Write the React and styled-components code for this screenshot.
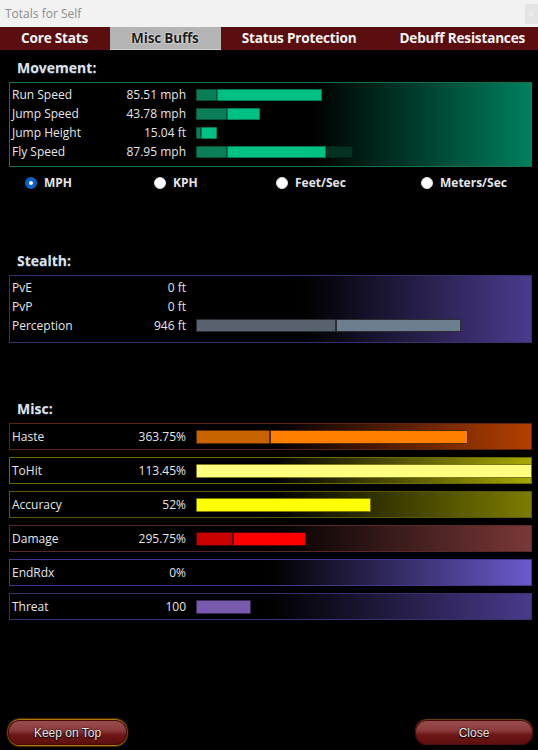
import React from "react";
import styled, { createGlobalStyle, css } from "styled-components";

const Global = createGlobalStyle`
  html, body { margin: 0; padding: 0; background: #000; }
  body { font-family: "Open Sans", "Noto Sans", sans-serif; }
  * { box-sizing: border-box; }
`;

const Window = styled.div`
  width: 538px;
  height: 750px;
  display: flex;
  flex-direction: column;
  background: #000;
  overflow: hidden;
`;

const TitleBar = styled.div`
  height: 27px;
  flex: none;
  display: flex;
  align-items: center;
  background: #f2f2f2;
  padding-left: 5px;
  color: #8c8c8c;
  font-size: 12px;
`;

const CloseBox = styled.div`
  margin-left: auto;
  width: 13px;
  height: 20px;
  background: #e4e4e4;
  color: #f4f4f4;
  font-size: 11px;
  line-height: 20px;
  padding-left: 3px;
  overflow: hidden;
`;

const TabBar = styled.div`
  height: 23px;
  flex: none;
  display: flex;
  background: #5a0e0f;
  overflow: hidden;
  white-space: nowrap;
`;

const Tab = styled.div`
  flex: none;
  padding: 0 22px 0 21px;
  height: 23px;
  line-height: 22px;
  font-size: 13.6px;
  font-weight: 700;
  color: #f4f4f4;
  letter-spacing: -0.2px;
  ${(p) =>
    p.$active &&
    css`
      background: #b4b4b4;
      color: #1c1c1c;
      text-shadow: 0 0 2px #fff, 0 0 1px #fff;
      border-bottom: 1px solid #d0d0d0;
    `}
`;

const Content = styled.div`
  display: flex;
  flex-direction: column;
  padding: 0 6px 0 9px;
`;

const Heading = styled.div`
  margin: ${(p) => p.$top}px 0 5px 8px;
  height: 18px;
  line-height: 18px;
  font-size: 14px;
  font-weight: 700;
  color: #dde3ea;
  text-shadow: 0 1px 1px #2a3550;
`;

const Panel = styled.div`
  border: 1px solid ${(p) => p.$border};
  background: linear-gradient(to right, #000 ${(p) => p.$stop}%, ${(p) => p.$color} 100%);
  padding: 2px 0 ${(p) => p.$pb}px 2px;
`;

const Row = styled.div`
  display: flex;
  align-items: center;
  height: 19px;
  font-size: 12px;
  color: #e6e6e6;
`;

const Label = styled.div`
  width: 110px;
  flex: none;
  white-space: nowrap;
`;

const Value = styled.div`
  width: 64px;
  flex: none;
  text-align: right;
  white-space: nowrap;
`;

const Bar = styled.div`
  margin-left: 10px;
  display: flex;
  height: ${(p) => p.$h}px;
`;

const Seg = styled.div`
  width: ${(p) => p.$w}px;
  height: 100%;
  background: ${(p) => p.$c};
  border: 1px solid ${(p) => p.$b || "rgba(0,0,0,0.35)"};
  border-radius: 1px;
`;

const RadioRow = styled.div`
  margin-top: 7px;
  height: 16px;
  display: grid;
  grid-template-columns: 129px 122px 145px auto;
  padding-left: 16px;
`;

const RadioItem = styled.div`
  display: flex;
  align-items: center;
  gap: 7px;
  font-size: 12px;
  font-weight: 700;
  color: #e4e6ea;
`;

const RadioDot = styled.span`
  width: 12px;
  height: 12px;
  border-radius: 50%;
  flex: none;
  background: #fff;
  ${(p) =>
    p.$on
      ? css`
          border: 4px solid #0a62c8;
        `
      : css`
          border: 1px solid #e0e0e0;
        `}
`;

const MiscList = styled.div`
  display: flex;
  flex-direction: column;
  gap: 7px;
`;

const MiscRow = styled.div`
  height: 27px;
  display: flex;
  align-items: center;
  padding-left: 2px;
  font-size: 12px;
  color: #e6e6e6;
  border: 1px solid ${(p) => p.$border};
  background: linear-gradient(to right, #000 ${(p) => p.$stop || 50}%, ${(p) => p.$color} 100%);
`;

const Footer = styled.div`
  margin-top: auto;
  display: flex;
  justify-content: space-between;
  padding: 0 5px 5px 8px;
`;

const Button = styled.div`
  width: ${(p) => p.$w}px;
  height: 25px;
  border-radius: 12px;
  display: flex;
  align-items: center;
  justify-content: center;
  font-family: "Liberation Sans", Arial, sans-serif;
  font-size: 12px;
  color: #e6e6e6;
  text-shadow: 0 0 2px #000, 0 1px 1px #000;
  background: linear-gradient(
    to bottom,
    #9a5050 0%,
    #8c3c3c 40%,
    #6e1616 60%,
    #5c0e0e 100%
  );
  box-shadow: ${(p) =>
    p.$glow
      ? "0 -1px 2px 0 #f0a400, 0 1px 2px 0 #f0a400, inset 0 0 0 1px #4a0a0a"
      : "0 -1px 1px 0 #6a4a10, inset 0 0 0 1px #4a0a0a"};
`;

const movement = [
  { l: "Run Speed", v: "85.51 mph", s: [[21, "#0b7d58"], [105, "#00c184"]] },
  { l: "Jump Speed", v: "43.78 mph", s: [[31, "#0b7d58"], [33, "#00c184"]] },
  { l: "Jump Height", v: "15.04 ft", s: [[5, "#0b7d58"], [16, "#00c184"]] },
  { l: "Fly Speed", v: "87.95 mph", s: [[31, "#0b7d58"], [99, "#00c184"], [27, "#033222"]] },
];

const misc = [
  { l: "Haste", v: "363.75%", border: "#5a2410", color: "#b43f00", s: [[74, "#c86400", "#5a2a00"], [198, "#ff8000", "#5a2a00"]] },
  { l: "ToHit", v: "113.45%", border: "#6a6a00", color: "#a8a800", s: [[336, "#ffff80", "#7a7a20"]] },
  { l: "Accuracy", v: "52%", border: "#5a5a00", color: "#7c7c00", s: [[175, "#ffff00", "#7a7a00"]] },
  { l: "Damage", v: "295.75%", border: "#5a2828", color: "#7a3838", s: [[37, "#c80000", "#500000"], [73, "#ff0000", "#500000"]] },
  { l: "EndRdx", v: "0%", border: "#44388a", color: "#6a5acd", s: [] },
  { l: "Threat", v: "100", border: "#3a3070", color: "#4a3a8c", s: [[55, "#7a5aac", "#3a2a5a"]] },
];

export default function App() {
  return (
    <>
      <Global />
      <Window>
        <TitleBar>
          Totals for Self
          <CloseBox>×</CloseBox>
        </TitleBar>
        <TabBar>
          <Tab>Core Stats</Tab>
          <Tab $active>Misc Buffs</Tab>
          <Tab>Status Protection</Tab>
          <Tab>Debuff Resistances</Tab>
        </TabBar>
        <Content>
          <Heading $top={9}>Movement:</Heading>
          <Panel $border="#17704f" $color="#00805e" $stop={58} $pb={5}>
            {movement.map((r) => (
              <Row key={r.l}>
                <Label>{r.l}</Label>
                <Value>{r.v}</Value>
                <Bar $h={12}>
                  {r.s.map(([w, c], i) => (
                    <Seg key={i} $w={w} $c={c} />
                  ))}
                </Bar>
              </Row>
            ))}
          </Panel>
          <RadioRow>
            <RadioItem>
              <RadioDot $on />
              MPH
            </RadioItem>
            <RadioItem>
              <RadioDot />
              KPH
            </RadioItem>
            <RadioItem>
              <RadioDot />
              Feet/Sec
            </RadioItem>
            <RadioItem>
              <RadioDot />
              Meters/Sec
            </RadioItem>
          </RadioRow>

          <Heading $top={62}>Stealth:</Heading>
          <Panel $border="#3a2f6e" $color="#4b3b8e" $stop={56} $pb={7}>
            <Row>
              <Label>PvE</Label>
              <Value>0 ft</Value>
            </Row>
            <Row>
              <Label>PvP</Label>
              <Value>0 ft</Value>
            </Row>
            <Row>
              <Label>Perception</Label>
              <Value>946 ft</Value>
              <Bar $h={13}>
                <Seg $w={140} $c="#58626e" $b="#2a2e34" />
                <Seg $w={125} $c="#6d7f8f" $b="#2a2e34" />
              </Bar>
            </Row>
          </Panel>

          <Heading $top={57}>Misc:</Heading>
          <MiscList>
            {misc.map((r) => (
              <MiscRow key={r.l} $border={r.border} $color={r.color}>
                <Label>{r.l}</Label>
                <Value>{r.v}</Value>
                <Bar $h={14}>
                  {r.s.map(([w, c, b], i) => (
                    <Seg key={i} $w={w} $c={c} $b={b} />
                  ))}
                </Bar>
              </MiscRow>
            ))}
          </MiscList>
        </Content>
        <Footer>
          <Button $w={119} $glow>
            Keep on Top
          </Button>
          <Button $w={118}>Close</Button>
        </Footer>
      </Window>
    </>
  );
}
